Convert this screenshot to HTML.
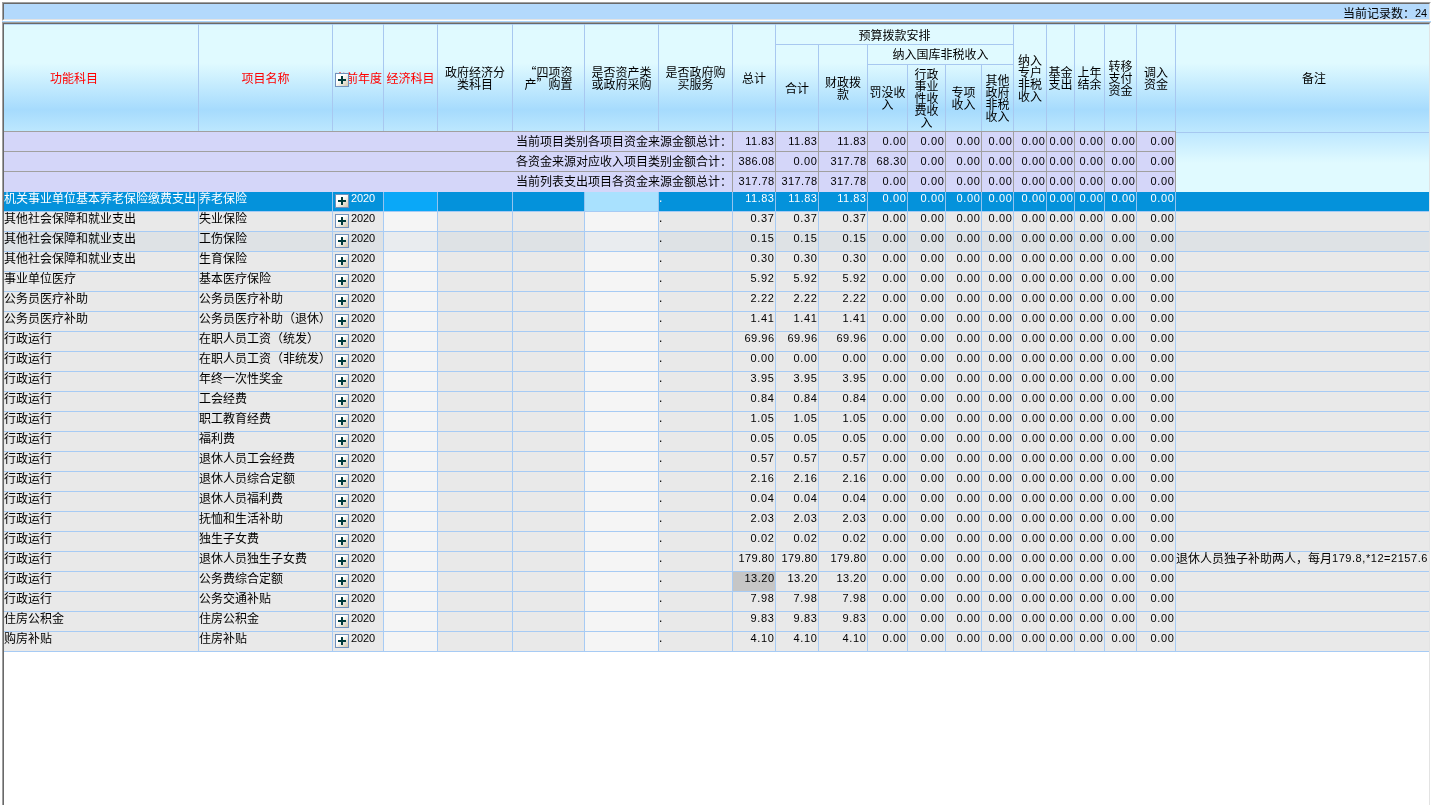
<!DOCTYPE html>
<html lang="zh-CN"><head><meta charset="utf-8"><title>预算项目列表</title>
<style>
html,body{margin:0;padding:0;background:#fff}
body{width:1432px;height:805px;overflow:hidden;position:relative;font:12px/12px "Liberation Sans","Noto Sans CJK SC",sans-serif;color:#000}
div{box-sizing:border-box}
#app{position:absolute;left:0;top:0;width:1432px;height:805px;overflow:hidden;will-change:transform}
.n{font-size:11px;letter-spacing:-0.12px}
.n4{letter-spacing:.65px}.n5{letter-spacing:.5px}.n6{letter-spacing:.39px}.n16{letter-spacing:.55px}
.u{position:relative;top:-1px}
.q{display:inline-block;position:relative;top:-1px;vertical-align:top;height:12px;width:12px;font-family:"Noto Sans CJK SC",sans-serif}
#bar{position:absolute;left:2px;top:2px;width:1429px;height:19px;border:1px solid;border-color:#a0a0a0 #fff #fff #a0a0a0}
#bar>div{width:100%;height:100%;border:1px solid;border-color:#696969 #e3e3e3 #e3e3e3 #696969;background:#b3d9fc;text-align:right;padding:4px 2px 0 0;white-space:nowrap}
#strip{position:absolute;left:2px;top:21px;width:1429px;height:1px;background:#a8d4fc}
#panel{position:absolute;left:2px;top:22px;width:1429px;height:800px;border:1px solid;border-color:#a0a0a0 #fff #fff #a0a0a0}
#panel>div{width:100%;height:100%;border:1px solid;border-color:#696969 #e3e3e3 #e3e3e3 #696969;background:#fff}
#hbg{position:absolute;left:4px;top:24px;width:1425px;height:108px;background:linear-gradient(to bottom,#b4d6f6 0,#b4d6f6 1px,#e0faff 1px,#e0faff 39px,#a6dbfd 86px,#bde8fe 108px)}
#rbg{position:absolute;left:1176px;top:132px;width:253px;height:60px;border-top:1px solid #a6c8f0;background:linear-gradient(to bottom,#bee8ff 0,#e0faff 30px,#e0faff 100%)}
.h{position:absolute;padding-top:2px;display:flex;align-items:center;justify-content:center;text-align:center;border-right:1px solid #a8c8f0;white-space:nowrap}
.h.bb{border-bottom:1px solid #a8c8f0}
.h.f{padding-top:3px}
.h.g1{padding-top:4px}
.h.g2{padding-top:1px}
.r{color:#f00}
.b{box-sizing:border-box;position:absolute;left:2px;top:2px;width:14px;height:14px;border:1px solid #7191bb;background:linear-gradient(135deg,#fff 0,#fff 38%,#d2c7ae 100%)}
.b:before{content:"";position:absolute;left:2px;top:5px;width:8px;height:2px;background:#003a3a}
.b:after{content:"";position:absolute;left:5px;top:2px;width:2px;height:8px;background:#003a3a}
.row{position:absolute;left:4px;width:1425px;height:20px;display:flex;background:#e9e9e9}
.row>div{flex:none;height:20px;border-top:1px solid #a7cbf4;border-right:1px solid #a7cbf4;white-space:nowrap;overflow:hidden;position:relative}
.row>div:last-child{border-right:0}
.row .w{background:#f5f5f5}
.row .y{padding-left:18px}
.row .t{padding-top:1px}
.row .a{text-align:right;padding-right:.5px}
.row.hov{background:#dee2e5}
.row.hov .w{background:#e9ecef}
.row.sel{background:#0492db;color:#fff;margin-top:1px;height:19px}
.row.sel>div{border-right-color:#93c4f0;border-top:0;height:19px}
.row.sel .w1{background:#0aa8f8}
.row.sel .w2{background:#a9e1fe}
.row.last{height:21px}
.row.last>div{height:21px;border-bottom:1px solid #a7cbf4}
.act{background:#c6c6c6}
.srow{position:absolute;left:4px;width:1172px;height:20px;display:flex;background:#d4d6f9}
.srow>div{flex:none;height:20px;border-top:1px solid #a0a0a0;border-right:1px solid #a0a0a0;white-space:nowrap;overflow:hidden;text-align:right;padding-top:4px}
.srow .a{padding-top:3px;padding-right:.5px}
.srow.s3,.srow.s3>div{height:21px}
.c1{width:195px}.c2{width:134px}.c3{width:51px}.c4{width:54px}.c5{width:75px}.c6{width:72px}.c7{width:74px}.c8{width:74px}.c9{width:43px}.c10{width:43px}.c11{width:49px}.c12{width:40px}.c13{width:38px}.c14{width:36px}.c15{width:32px}.c16{width:33px}.c17{width:28px}.c18{width:30px}.c19{width:32px}.c20{width:39px}.c21{width:253px}
</style></head>
<body><div id="app">
<div id="bar"><div>当前记录数：<span class="n u">24</span></div></div>
<div id="strip"></div>
<div id="panel"><div></div></div>
<div id="hbg"></div><div id="rbg"></div>
<div class="h r f" style="padding-right:54px;left:4px;top:24px;width:195px;height:107px"><div>功能科目</div></div>
<div class="h r f" style="left:199px;top:24px;width:134px;height:107px"><div>项目名称</div></div>
<div class="h r f" style="left:333px;top:24px;width:51px;height:107px"><div>当前年度</div><i class="b" style="top:49px"></i></div>
<div class="h r f" style="left:384px;top:24px;width:54px;height:107px"><div>经济科目</div></div>
<div class="h f" style="left:438px;top:24px;width:75px;height:107px"><div>政府经济分<br>类科目</div></div>
<div class="h f" style="left:513px;top:24px;width:72px;height:107px"><div><span class="q" style="text-align:right">“</span>四项资<br>产<span class="q" style="text-align:left">”</span>购置</div></div>
<div class="h f" style="left:585px;top:24px;width:74px;height:107px"><div>是否资产类<br>或政府采购</div></div>
<div class="h f" style="left:659px;top:24px;width:74px;height:107px"><div>是否政府购<br>买服务</div></div>
<div class="h f" style="left:733px;top:24px;width:43px;height:107px"><div>总计</div></div>
<div class="h bb g1" style="left:776px;top:24px;width:238px;height:21px"><div>预算拨款安排</div></div>
<div class="h " style="left:776px;top:45px;width:43px;height:86px"><div>合计</div></div>
<div class="h " style="left:819px;top:45px;width:49px;height:86px"><div>财政拨<br>款</div></div>
<div class="h bb g2" style="left:868px;top:45px;width:146px;height:20px"><div>纳入国库非税收入</div></div>
<div class="h " style="left:868px;top:65px;width:40px;height:66px"><div>罚没收<br>入</div></div>
<div class="h " style="left:908px;top:65px;width:38px;height:66px"><div>行政<br>事业<br>性收<br>费收<br>入</div></div>
<div class="h " style="left:946px;top:65px;width:36px;height:66px"><div>专项<br>收入</div></div>
<div class="h " style="left:982px;top:65px;width:32px;height:66px"><div>其他<br>政府<br>非税<br>收入</div></div>
<div class="h f" style="left:1014px;top:24px;width:33px;height:107px"><div>纳入<br>专户<br>非税<br>收入</div></div>
<div class="h f" style="left:1047px;top:24px;width:28px;height:107px"><div>基金<br>支出</div></div>
<div class="h f" style="left:1075px;top:24px;width:30px;height:107px"><div>上年<br>结余</div></div>
<div class="h f" style="left:1105px;top:24px;width:32px;height:107px"><div>转移<br>支付<br>资金</div></div>
<div class="h f" style="left:1137px;top:24px;width:39px;height:107px"><div>调入<br>资金</div></div>
<div class="h f" style="left:1176px;top:24px;width:276px;height:107px;border-right:0"><div>备注</div></div>
<div class="srow" style="top:131px"><div style="width:729px">当前项目类别各项目资金来源金额总计：</div><div class="a n n5 c9">11.83</div><div class="a n n5 c10">11.83</div><div class="a n n5 c11">11.83</div><div class="a n n4 c12">0.00</div><div class="a n n4 c13">0.00</div><div class="a n n4 c14">0.00</div><div class="a n n4 c15">0.00</div><div class="a n n4 c16">0.00</div><div class="a n n4 c17">0.00</div><div class="a n n4 c18">0.00</div><div class="a n n4 c19">0.00</div><div class="a n n4 c20">0.00</div></div>
<div class="srow" style="top:151px"><div style="width:729px">各资金来源对应收入项目类别金额合计：</div><div class="a n n6 c9">386.08</div><div class="a n n4 c10">0.00</div><div class="a n n6 c11">317.78</div><div class="a n n5 c12">68.30</div><div class="a n n4 c13">0.00</div><div class="a n n4 c14">0.00</div><div class="a n n4 c15">0.00</div><div class="a n n4 c16">0.00</div><div class="a n n4 c17">0.00</div><div class="a n n4 c18">0.00</div><div class="a n n4 c19">0.00</div><div class="a n n4 c20">0.00</div></div>
<div class="srow s3" style="top:171px"><div style="width:729px">当前列表支出项目各资金来源金额总计：</div><div class="a n n6 c9">317.78</div><div class="a n n6 c10">317.78</div><div class="a n n6 c11">317.78</div><div class="a n n4 c12">0.00</div><div class="a n n4 c13">0.00</div><div class="a n n4 c14">0.00</div><div class="a n n4 c15">0.00</div><div class="a n n4 c16">0.00</div><div class="a n n4 c17">0.00</div><div class="a n n4 c18">0.00</div><div class="a n n4 c19">0.00</div><div class="a n n4 c20">0.00</div></div>
<div class="row sel" style="top:191px"><div class="c1 t">机关事业单位基本养老保险缴费支出</div><div class="c2 t">养老保险</div><div class="c3 y"><i class="b"></i><span class="n">2020</span></div><div class="c4 w w1"></div><div class="c5"></div><div class="c6"></div><div class="c7 w w2"></div><div class="c8">.</div><div class="a n n5 c9">11.83</div><div class="a n n5 c10">11.83</div><div class="a n n5 c11">11.83</div><div class="a n n4 c12">0.00</div><div class="a n n4 c13">0.00</div><div class="a n n4 c14">0.00</div><div class="a n n4 c15">0.00</div><div class="a n n4 c16">0.00</div><div class="a n n4 c17">0.00</div><div class="a n n4 c18">0.00</div><div class="a n n4 c19">0.00</div><div class="a n n4 c20">0.00</div><div class="c21 t"></div></div>
<div class="row" style="top:211px"><div class="c1 t">其他社会保障和就业支出</div><div class="c2 t">失业保险</div><div class="c3 y"><i class="b"></i><span class="n">2020</span></div><div class="c4 w w1"></div><div class="c5"></div><div class="c6"></div><div class="c7 w w2"></div><div class="c8">.</div><div class="a n n4 c9">0.37</div><div class="a n n4 c10">0.37</div><div class="a n n4 c11">0.37</div><div class="a n n4 c12">0.00</div><div class="a n n4 c13">0.00</div><div class="a n n4 c14">0.00</div><div class="a n n4 c15">0.00</div><div class="a n n4 c16">0.00</div><div class="a n n4 c17">0.00</div><div class="a n n4 c18">0.00</div><div class="a n n4 c19">0.00</div><div class="a n n4 c20">0.00</div><div class="c21 t"></div></div>
<div class="row hov" style="top:231px"><div class="c1 t">其他社会保障和就业支出</div><div class="c2 t">工伤保险</div><div class="c3 y"><i class="b"></i><span class="n">2020</span></div><div class="c4 w w1"></div><div class="c5"></div><div class="c6"></div><div class="c7 w w2"></div><div class="c8">.</div><div class="a n n4 c9">0.15</div><div class="a n n4 c10">0.15</div><div class="a n n4 c11">0.15</div><div class="a n n4 c12">0.00</div><div class="a n n4 c13">0.00</div><div class="a n n4 c14">0.00</div><div class="a n n4 c15">0.00</div><div class="a n n4 c16">0.00</div><div class="a n n4 c17">0.00</div><div class="a n n4 c18">0.00</div><div class="a n n4 c19">0.00</div><div class="a n n4 c20">0.00</div><div class="c21 t"></div></div>
<div class="row" style="top:251px"><div class="c1 t">其他社会保障和就业支出</div><div class="c2 t">生育保险</div><div class="c3 y"><i class="b"></i><span class="n">2020</span></div><div class="c4 w w1"></div><div class="c5"></div><div class="c6"></div><div class="c7 w w2"></div><div class="c8">.</div><div class="a n n4 c9">0.30</div><div class="a n n4 c10">0.30</div><div class="a n n4 c11">0.30</div><div class="a n n4 c12">0.00</div><div class="a n n4 c13">0.00</div><div class="a n n4 c14">0.00</div><div class="a n n4 c15">0.00</div><div class="a n n4 c16">0.00</div><div class="a n n4 c17">0.00</div><div class="a n n4 c18">0.00</div><div class="a n n4 c19">0.00</div><div class="a n n4 c20">0.00</div><div class="c21 t"></div></div>
<div class="row" style="top:271px"><div class="c1 t">事业单位医疗</div><div class="c2 t">基本医疗保险</div><div class="c3 y"><i class="b"></i><span class="n">2020</span></div><div class="c4 w w1"></div><div class="c5"></div><div class="c6"></div><div class="c7 w w2"></div><div class="c8">.</div><div class="a n n4 c9">5.92</div><div class="a n n4 c10">5.92</div><div class="a n n4 c11">5.92</div><div class="a n n4 c12">0.00</div><div class="a n n4 c13">0.00</div><div class="a n n4 c14">0.00</div><div class="a n n4 c15">0.00</div><div class="a n n4 c16">0.00</div><div class="a n n4 c17">0.00</div><div class="a n n4 c18">0.00</div><div class="a n n4 c19">0.00</div><div class="a n n4 c20">0.00</div><div class="c21 t"></div></div>
<div class="row" style="top:291px"><div class="c1 t">公务员医疗补助</div><div class="c2 t">公务员医疗补助</div><div class="c3 y"><i class="b"></i><span class="n">2020</span></div><div class="c4 w w1"></div><div class="c5"></div><div class="c6"></div><div class="c7 w w2"></div><div class="c8">.</div><div class="a n n4 c9">2.22</div><div class="a n n4 c10">2.22</div><div class="a n n4 c11">2.22</div><div class="a n n4 c12">0.00</div><div class="a n n4 c13">0.00</div><div class="a n n4 c14">0.00</div><div class="a n n4 c15">0.00</div><div class="a n n4 c16">0.00</div><div class="a n n4 c17">0.00</div><div class="a n n4 c18">0.00</div><div class="a n n4 c19">0.00</div><div class="a n n4 c20">0.00</div><div class="c21 t"></div></div>
<div class="row" style="top:311px"><div class="c1 t">公务员医疗补助</div><div class="c2 t">公务员医疗补助（退休）</div><div class="c3 y"><i class="b"></i><span class="n">2020</span></div><div class="c4 w w1"></div><div class="c5"></div><div class="c6"></div><div class="c7 w w2"></div><div class="c8">.</div><div class="a n n4 c9">1.41</div><div class="a n n4 c10">1.41</div><div class="a n n4 c11">1.41</div><div class="a n n4 c12">0.00</div><div class="a n n4 c13">0.00</div><div class="a n n4 c14">0.00</div><div class="a n n4 c15">0.00</div><div class="a n n4 c16">0.00</div><div class="a n n4 c17">0.00</div><div class="a n n4 c18">0.00</div><div class="a n n4 c19">0.00</div><div class="a n n4 c20">0.00</div><div class="c21 t"></div></div>
<div class="row" style="top:331px"><div class="c1 t">行政运行</div><div class="c2 t">在职人员工资（统发）</div><div class="c3 y"><i class="b"></i><span class="n">2020</span></div><div class="c4 w w1"></div><div class="c5"></div><div class="c6"></div><div class="c7 w w2"></div><div class="c8">.</div><div class="a n n5 c9">69.96</div><div class="a n n5 c10">69.96</div><div class="a n n5 c11">69.96</div><div class="a n n4 c12">0.00</div><div class="a n n4 c13">0.00</div><div class="a n n4 c14">0.00</div><div class="a n n4 c15">0.00</div><div class="a n n4 c16">0.00</div><div class="a n n4 c17">0.00</div><div class="a n n4 c18">0.00</div><div class="a n n4 c19">0.00</div><div class="a n n4 c20">0.00</div><div class="c21 t"></div></div>
<div class="row" style="top:351px"><div class="c1 t">行政运行</div><div class="c2 t">在职人员工资（非统发）</div><div class="c3 y"><i class="b"></i><span class="n">2020</span></div><div class="c4 w w1"></div><div class="c5"></div><div class="c6"></div><div class="c7 w w2"></div><div class="c8">.</div><div class="a n n4 c9">0.00</div><div class="a n n4 c10">0.00</div><div class="a n n4 c11">0.00</div><div class="a n n4 c12">0.00</div><div class="a n n4 c13">0.00</div><div class="a n n4 c14">0.00</div><div class="a n n4 c15">0.00</div><div class="a n n4 c16">0.00</div><div class="a n n4 c17">0.00</div><div class="a n n4 c18">0.00</div><div class="a n n4 c19">0.00</div><div class="a n n4 c20">0.00</div><div class="c21 t"></div></div>
<div class="row" style="top:371px"><div class="c1 t">行政运行</div><div class="c2 t">年终一次性奖金</div><div class="c3 y"><i class="b"></i><span class="n">2020</span></div><div class="c4 w w1"></div><div class="c5"></div><div class="c6"></div><div class="c7 w w2"></div><div class="c8">.</div><div class="a n n4 c9">3.95</div><div class="a n n4 c10">3.95</div><div class="a n n4 c11">3.95</div><div class="a n n4 c12">0.00</div><div class="a n n4 c13">0.00</div><div class="a n n4 c14">0.00</div><div class="a n n4 c15">0.00</div><div class="a n n4 c16">0.00</div><div class="a n n4 c17">0.00</div><div class="a n n4 c18">0.00</div><div class="a n n4 c19">0.00</div><div class="a n n4 c20">0.00</div><div class="c21 t"></div></div>
<div class="row" style="top:391px"><div class="c1 t">行政运行</div><div class="c2 t">工会经费</div><div class="c3 y"><i class="b"></i><span class="n">2020</span></div><div class="c4 w w1"></div><div class="c5"></div><div class="c6"></div><div class="c7 w w2"></div><div class="c8">.</div><div class="a n n4 c9">0.84</div><div class="a n n4 c10">0.84</div><div class="a n n4 c11">0.84</div><div class="a n n4 c12">0.00</div><div class="a n n4 c13">0.00</div><div class="a n n4 c14">0.00</div><div class="a n n4 c15">0.00</div><div class="a n n4 c16">0.00</div><div class="a n n4 c17">0.00</div><div class="a n n4 c18">0.00</div><div class="a n n4 c19">0.00</div><div class="a n n4 c20">0.00</div><div class="c21 t"></div></div>
<div class="row" style="top:411px"><div class="c1 t">行政运行</div><div class="c2 t">职工教育经费</div><div class="c3 y"><i class="b"></i><span class="n">2020</span></div><div class="c4 w w1"></div><div class="c5"></div><div class="c6"></div><div class="c7 w w2"></div><div class="c8">.</div><div class="a n n4 c9">1.05</div><div class="a n n4 c10">1.05</div><div class="a n n4 c11">1.05</div><div class="a n n4 c12">0.00</div><div class="a n n4 c13">0.00</div><div class="a n n4 c14">0.00</div><div class="a n n4 c15">0.00</div><div class="a n n4 c16">0.00</div><div class="a n n4 c17">0.00</div><div class="a n n4 c18">0.00</div><div class="a n n4 c19">0.00</div><div class="a n n4 c20">0.00</div><div class="c21 t"></div></div>
<div class="row" style="top:431px"><div class="c1 t">行政运行</div><div class="c2 t">福利费</div><div class="c3 y"><i class="b"></i><span class="n">2020</span></div><div class="c4 w w1"></div><div class="c5"></div><div class="c6"></div><div class="c7 w w2"></div><div class="c8">.</div><div class="a n n4 c9">0.05</div><div class="a n n4 c10">0.05</div><div class="a n n4 c11">0.05</div><div class="a n n4 c12">0.00</div><div class="a n n4 c13">0.00</div><div class="a n n4 c14">0.00</div><div class="a n n4 c15">0.00</div><div class="a n n4 c16">0.00</div><div class="a n n4 c17">0.00</div><div class="a n n4 c18">0.00</div><div class="a n n4 c19">0.00</div><div class="a n n4 c20">0.00</div><div class="c21 t"></div></div>
<div class="row" style="top:451px"><div class="c1 t">行政运行</div><div class="c2 t">退休人员工会经费</div><div class="c3 y"><i class="b"></i><span class="n">2020</span></div><div class="c4 w w1"></div><div class="c5"></div><div class="c6"></div><div class="c7 w w2"></div><div class="c8">.</div><div class="a n n4 c9">0.57</div><div class="a n n4 c10">0.57</div><div class="a n n4 c11">0.57</div><div class="a n n4 c12">0.00</div><div class="a n n4 c13">0.00</div><div class="a n n4 c14">0.00</div><div class="a n n4 c15">0.00</div><div class="a n n4 c16">0.00</div><div class="a n n4 c17">0.00</div><div class="a n n4 c18">0.00</div><div class="a n n4 c19">0.00</div><div class="a n n4 c20">0.00</div><div class="c21 t"></div></div>
<div class="row" style="top:471px"><div class="c1 t">行政运行</div><div class="c2 t">退休人员综合定额</div><div class="c3 y"><i class="b"></i><span class="n">2020</span></div><div class="c4 w w1"></div><div class="c5"></div><div class="c6"></div><div class="c7 w w2"></div><div class="c8">.</div><div class="a n n4 c9">2.16</div><div class="a n n4 c10">2.16</div><div class="a n n4 c11">2.16</div><div class="a n n4 c12">0.00</div><div class="a n n4 c13">0.00</div><div class="a n n4 c14">0.00</div><div class="a n n4 c15">0.00</div><div class="a n n4 c16">0.00</div><div class="a n n4 c17">0.00</div><div class="a n n4 c18">0.00</div><div class="a n n4 c19">0.00</div><div class="a n n4 c20">0.00</div><div class="c21 t"></div></div>
<div class="row" style="top:491px"><div class="c1 t">行政运行</div><div class="c2 t">退休人员福利费</div><div class="c3 y"><i class="b"></i><span class="n">2020</span></div><div class="c4 w w1"></div><div class="c5"></div><div class="c6"></div><div class="c7 w w2"></div><div class="c8">.</div><div class="a n n4 c9">0.04</div><div class="a n n4 c10">0.04</div><div class="a n n4 c11">0.04</div><div class="a n n4 c12">0.00</div><div class="a n n4 c13">0.00</div><div class="a n n4 c14">0.00</div><div class="a n n4 c15">0.00</div><div class="a n n4 c16">0.00</div><div class="a n n4 c17">0.00</div><div class="a n n4 c18">0.00</div><div class="a n n4 c19">0.00</div><div class="a n n4 c20">0.00</div><div class="c21 t"></div></div>
<div class="row" style="top:511px"><div class="c1 t">行政运行</div><div class="c2 t">抚恤和生活补助</div><div class="c3 y"><i class="b"></i><span class="n">2020</span></div><div class="c4 w w1"></div><div class="c5"></div><div class="c6"></div><div class="c7 w w2"></div><div class="c8">.</div><div class="a n n4 c9">2.03</div><div class="a n n4 c10">2.03</div><div class="a n n4 c11">2.03</div><div class="a n n4 c12">0.00</div><div class="a n n4 c13">0.00</div><div class="a n n4 c14">0.00</div><div class="a n n4 c15">0.00</div><div class="a n n4 c16">0.00</div><div class="a n n4 c17">0.00</div><div class="a n n4 c18">0.00</div><div class="a n n4 c19">0.00</div><div class="a n n4 c20">0.00</div><div class="c21 t"></div></div>
<div class="row" style="top:531px"><div class="c1 t">行政运行</div><div class="c2 t">独生子女费</div><div class="c3 y"><i class="b"></i><span class="n">2020</span></div><div class="c4 w w1"></div><div class="c5"></div><div class="c6"></div><div class="c7 w w2"></div><div class="c8">.</div><div class="a n n4 c9">0.02</div><div class="a n n4 c10">0.02</div><div class="a n n4 c11">0.02</div><div class="a n n4 c12">0.00</div><div class="a n n4 c13">0.00</div><div class="a n n4 c14">0.00</div><div class="a n n4 c15">0.00</div><div class="a n n4 c16">0.00</div><div class="a n n4 c17">0.00</div><div class="a n n4 c18">0.00</div><div class="a n n4 c19">0.00</div><div class="a n n4 c20">0.00</div><div class="c21 t"></div></div>
<div class="row" style="top:551px"><div class="c1 t">行政运行</div><div class="c2 t">退休人员独生子女费</div><div class="c3 y"><i class="b"></i><span class="n">2020</span></div><div class="c4 w w1"></div><div class="c5"></div><div class="c6"></div><div class="c7 w w2"></div><div class="c8">.</div><div class="a n n6 c9">179.80</div><div class="a n n6 c10">179.80</div><div class="a n n6 c11">179.80</div><div class="a n n4 c12">0.00</div><div class="a n n4 c13">0.00</div><div class="a n n4 c14">0.00</div><div class="a n n4 c15">0.00</div><div class="a n n4 c16">0.00</div><div class="a n n4 c17">0.00</div><div class="a n n4 c18">0.00</div><div class="a n n4 c19">0.00</div><div class="a n n4 c20">0.00</div><div class="c21 t">退休人员独子补助两人，每月<span class="n u n16">179.8,*12=2157.6</span></div></div>
<div class="row" style="top:571px"><div class="c1 t">行政运行</div><div class="c2 t">公务费综合定额</div><div class="c3 y"><i class="b"></i><span class="n">2020</span></div><div class="c4 w w1"></div><div class="c5"></div><div class="c6"></div><div class="c7 w w2"></div><div class="c8">.</div><div class="a n n5 c9 act">13.20</div><div class="a n n5 c10">13.20</div><div class="a n n5 c11">13.20</div><div class="a n n4 c12">0.00</div><div class="a n n4 c13">0.00</div><div class="a n n4 c14">0.00</div><div class="a n n4 c15">0.00</div><div class="a n n4 c16">0.00</div><div class="a n n4 c17">0.00</div><div class="a n n4 c18">0.00</div><div class="a n n4 c19">0.00</div><div class="a n n4 c20">0.00</div><div class="c21 t"></div></div>
<div class="row" style="top:591px"><div class="c1 t">行政运行</div><div class="c2 t">公务交通补贴</div><div class="c3 y"><i class="b"></i><span class="n">2020</span></div><div class="c4 w w1"></div><div class="c5"></div><div class="c6"></div><div class="c7 w w2"></div><div class="c8">.</div><div class="a n n4 c9">7.98</div><div class="a n n4 c10">7.98</div><div class="a n n4 c11">7.98</div><div class="a n n4 c12">0.00</div><div class="a n n4 c13">0.00</div><div class="a n n4 c14">0.00</div><div class="a n n4 c15">0.00</div><div class="a n n4 c16">0.00</div><div class="a n n4 c17">0.00</div><div class="a n n4 c18">0.00</div><div class="a n n4 c19">0.00</div><div class="a n n4 c20">0.00</div><div class="c21 t"></div></div>
<div class="row" style="top:611px"><div class="c1 t">住房公积金</div><div class="c2 t">住房公积金</div><div class="c3 y"><i class="b"></i><span class="n">2020</span></div><div class="c4 w w1"></div><div class="c5"></div><div class="c6"></div><div class="c7 w w2"></div><div class="c8">.</div><div class="a n n4 c9">9.83</div><div class="a n n4 c10">9.83</div><div class="a n n4 c11">9.83</div><div class="a n n4 c12">0.00</div><div class="a n n4 c13">0.00</div><div class="a n n4 c14">0.00</div><div class="a n n4 c15">0.00</div><div class="a n n4 c16">0.00</div><div class="a n n4 c17">0.00</div><div class="a n n4 c18">0.00</div><div class="a n n4 c19">0.00</div><div class="a n n4 c20">0.00</div><div class="c21 t"></div></div>
<div class="row last" style="top:631px"><div class="c1 t">购房补贴</div><div class="c2 t">住房补贴</div><div class="c3 y"><i class="b"></i><span class="n">2020</span></div><div class="c4 w w1"></div><div class="c5"></div><div class="c6"></div><div class="c7 w w2"></div><div class="c8">.</div><div class="a n n4 c9">4.10</div><div class="a n n4 c10">4.10</div><div class="a n n4 c11">4.10</div><div class="a n n4 c12">0.00</div><div class="a n n4 c13">0.00</div><div class="a n n4 c14">0.00</div><div class="a n n4 c15">0.00</div><div class="a n n4 c16">0.00</div><div class="a n n4 c17">0.00</div><div class="a n n4 c18">0.00</div><div class="a n n4 c19">0.00</div><div class="a n n4 c20">0.00</div><div class="c21 t"></div></div>
</div></body></html>
